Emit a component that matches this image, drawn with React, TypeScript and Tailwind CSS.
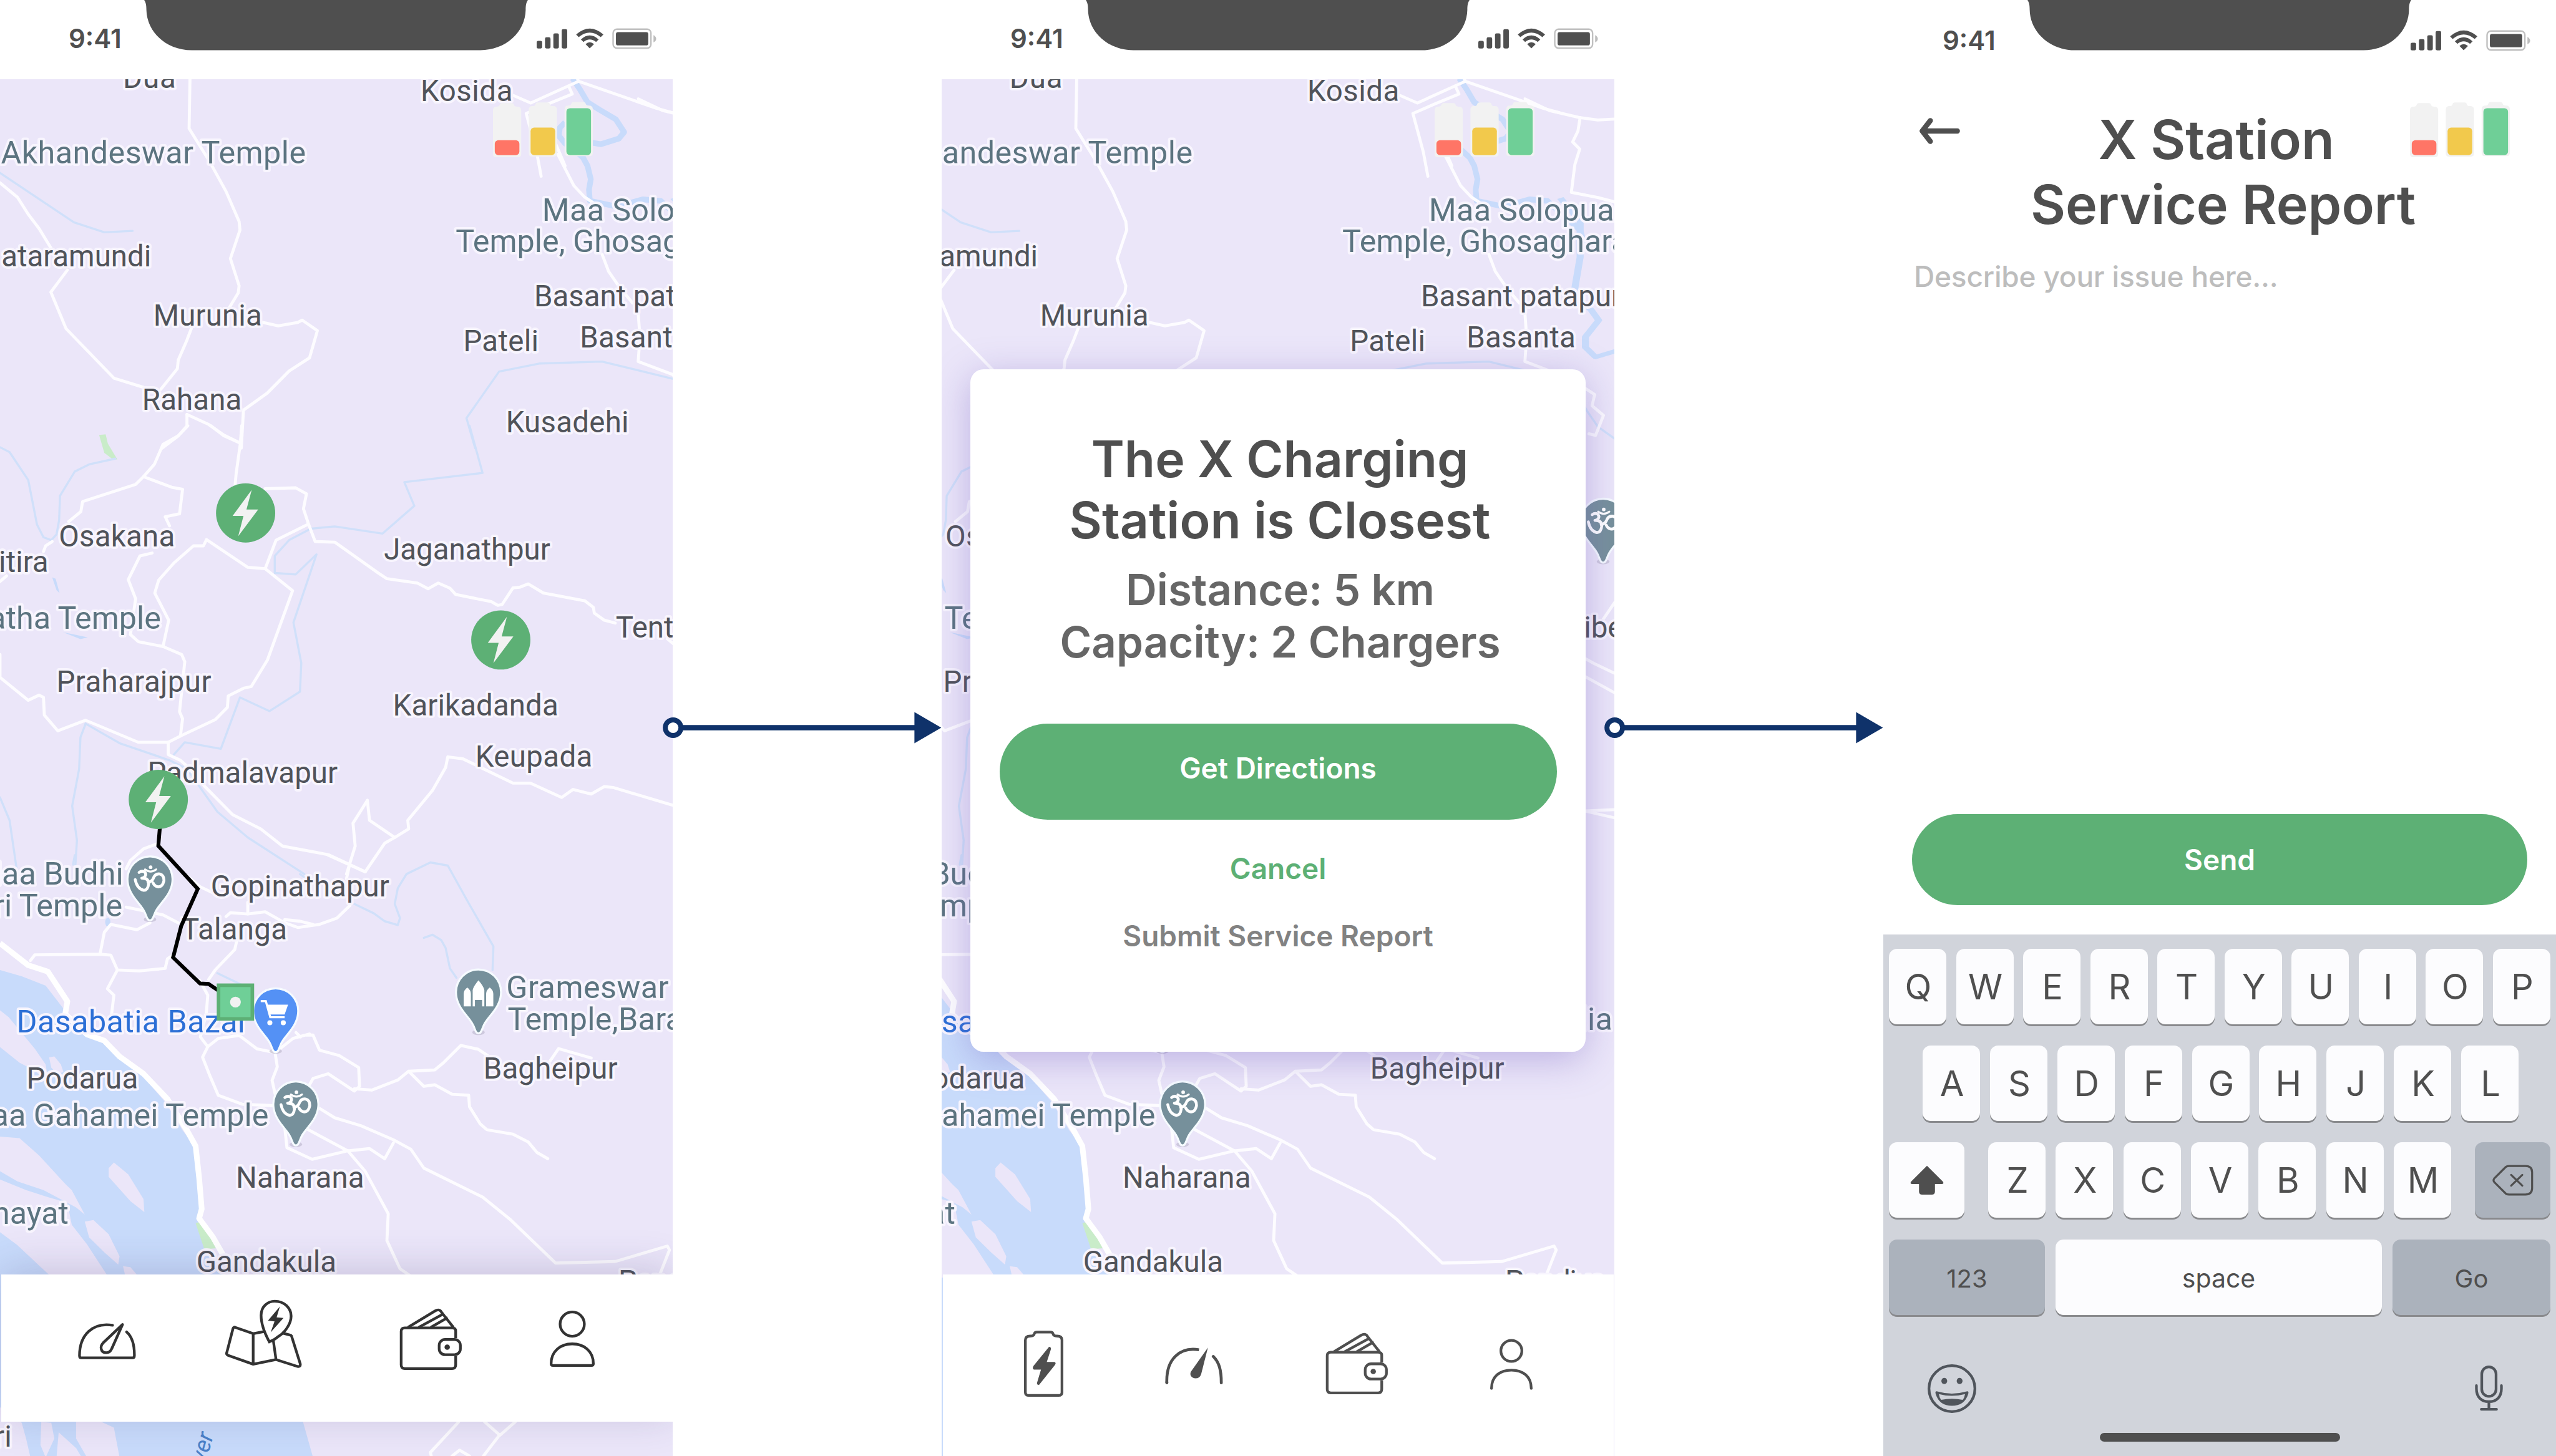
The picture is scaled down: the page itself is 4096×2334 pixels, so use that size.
import React from "react";

type Sheet = { transform: string; roads?: string[]; streams?: string[] };
type Label = { text: string; x: number; y: number; right?: number; end?: boolean; kind?: "poi" | "shop" };

/* ---------- map data, split into survey sheets ---------- */

const sheets: Sheet[] = [
  {
    transform: "scale(0.96939 0.63776)",
    roads: [
      "437,276 435,450 480,560 520,670 550,775 552,805 530,905 550,1000 548,1025 528,1075",
      "0,640 40,690 65,750 90,800 118,870",
      "155,945 117,1022 152,1150 262,1323 330,1355",
      "440,1150 430,1190 410,1260 408,1290 370,1362",
      "605,1128 640,1140 685,1128 695,1120 730,1157 720,1210 712,1252 665,1298 615,1375 560,1435 555,1568",
      "430,1450 430,1490 410,1525 373,1568",
      "430,1450 480,1485 515,1522 552,1550",
      "1283,540 1320,650 1345,690 1385,730",
      "1385,890 1400,950 1425,1005 1455,1060",
      "1468,1095 1472,1180 1468,1265 1547,1310 1560,1330",
    ],
    streams: [
      "0,605 170,778 240,813 305,808",
      "1093,1568 1073,1463 1148,1300 1240,1272 1385,1265 1547,1325 1570,1340",
    ],
  },
  {
    transform: "translate(0 950) scale(0.96939 0.63776)",
    roads: [
      "556,0 553,60 543,170 541,205",
      "485,0 515,35 552,60",
      "432,0 410,35 375,65 355,135 330,178 312,205 190,265 186,300 158,335",
      "330,178 395,215 420,222 413,308 380,318 390,350",
      "610,220 680,217 705,238 698,290 710,345 725,405 770,407 870,515 890,535 960,550 985,570 1008,550 1035,568 1048,590 1130,615 1145,628 1155,625 1180,567 1195,565 1215,553 1250,585 1345,612 1365,635 1367,655 1390,680 1415,690",
      "708,345 635,400 610,500 570,495 475,398 468,420 445,420 400,480 365,540 356,585 388,680 375,772",
      "610,500 673,577 615,820 578,912 560,918 525,945 523,985 495,1028 418,1083 387,1107 318,1107 197,1030 133,1067 102,1012 100,950 90,942 65,960 0,880 0,800",
      "350,445 322,455 295,538 312,605 300,730 318,755 375,772 418,800 425,825 413,1000 420,1025 415,1085",
      "387,1107 387,1150 415,1170 430,1190 470,1260 535,1360 600,1410 650,1470 755,1500 840,1560",
      "0,545 15,525",
      "120,405 105,420 100,440",
      "845,1310 812,1390 817,1470 797,1568",
      "845,1310 850,1380 908,1440",
      "840,1560 885,1460 908,1440 940,1410 938,1380 995,1275 1025,1195 1030,1158 1065,1165 1180,1250 1220,1250 1292,1300 1318,1272 1360,1288 1390,1262 1410,1265 1547,1327 1700,1380",
      "365,1460 330,1480 300,1520 290,1550",
      "1535,745 1555,770 1625,830 1680,870",
    ],
    streams: [
      "0,75 22,92 65,190 85,345 100,390 118,400 130,380 136,330 138,245 172,160 205,135 265,115",
      "1080,0 1110,165 930,197 953,280 880,377 770,352 715,360 665,400 632,455 632,515 680,520 728,450 675,688 693,830 690,930 620,998 552,950 508,1130 425,1107 400,1150",
      "197,1042 275,1110 390,1170 430,1200 500,1350 570,1440 700,1568",
      "197,1042 185,1090 182,1200 166,1330 177,1450 172,1568",
      "0,1300 22,1380 40,1568",
    ],
  },
  {
    transform: "translate(0 1750) scale(0.96939 0.70151)",
    roads: [
      "755,225 840,278",
      "797,300 805,250",
      "805,385 775,425 735,445 685,455 655,440 610,405 570,412 530,408 520,420",
      "570,412 570,375",
      "655,430 690,435 720,445",
      "490,345 460,325 430,290",
      "545,495 540,525 495,590 480,620",
      "70,560 80,542 230,540 255,543 270,590 320,593 380,585 385,555 400,540",
      "270,590 247,650 262,670 255,750",
      "230,540 240,470 255,445 315,462 345,440",
      "290,390 375,415 410,440",
      "705,797 720,797 735,845 780,862 825,900 827,960 815,975 755,920 720,935 710,960",
      "815,968 855,972 915,940 940,912 1000,908 1020,885 1060,830 1100,842 1130,870",
      "940,912 975,960 1000,955 1040,985 1078,988 1080,1025 1105,1080 1120,1098 1180,1112 1215,1137 1235,1170 1260,1190",
      "1265,880 1285,840 1360,870",
      "735,1030 770,1060 830,1085 905,1130 945,1160 975,1220 1110,1312 1175,1385 1278,1522 1415,1517 1535,1468 1540,1480 1515,1568",
      "705,1095 800,1165 840,1230 893,1365 890,1450 920,1540 950,1568",
      "800,1165 718,1192 660,1155 655,1090",
      "800,1165 850,1158 885,1190 905,1140",
    ],
    streams: [
      "700,295 690,285",
      "815,380 860,410 885,435 915,447 920,425 908,380 915,330 935,285 990,248 1030,258 1075,370 1135,515 1133,590",
      "975,488 995,478 1015,495 1025,520 1035,585 1050,615",
      "500,600 560,640",
      "172,225 168,255",
    ],
  },
  {
    transform: "translate(280 2180) scale(0.33333)",
    roads: [
      "495,20 550,120 540,240 500,400 550,465 515,535 560,650 620,790 780,850 1000,860",
      "550,465 620,410 760,390 880,480 1000,505 1015,600 980,690 1000,780",
      "1000,505 1120,410 1230,380",
      "1140,370 1170,400",
    ],
  },
  {
    transform: "translate(1080 40) scale(0.33333)",
    roads: [
      "195,520 310,570 630,425 620,400",
      "630,425 1150,605 1260,635",
      "565,460 588,510 430,575 280,640 350,900 380,1060",
      "480,850 540,990",
    ],
  },
  {
    transform: "translate(0 2780) scale(0.96939 0.33333)",
    roads: ["1055,1176 990,1380 992,1404", "1115,1176 1150,1265 1185,1176", "1150,1260 1112,1404", "1040,1404 1057,1365 1080,1404"],
  },
  {
    transform: "translate(102.5 0) scale(0.98213 0.57398)",
    roads: ["1345,385 1400,430 1468,457 1510,467 1548,463", "1470,457 1465,510 1453,552 1469,580 1458,640 1450,748 1510,768 1548,785"],
  },
  {
    transform: "translate(102.5 800) scale(0.98213 0.89286)",
    roads: [
      "1482,75 1503,90 1497,118 1523,142 1505,192 1490,188",
      "1482,795 1548,835",
      "1482,1130 1548,1127",
      "1548,610 1520,655",
    ],
    streams: ["1470,100 1485,130 1510,170 1548,200"],
  },
];

const labels: Label[] = [
  { text: "Dua", x: 279, y: 196, right: 390 },
  { text: "Kosida", x: 943, y: 226, right: 1141 },
  { text: "Akhandeswar Temple", x: 4, y: 365, right: 680, kind: "poi" },
  { text: "ataramundi", x: 5, y: 594, right: 335 },
  { text: "Murunia", x: 347, y: 727, right: 582 },
  { text: "Rahana", x: 322, y: 914, right: 537 },
  { text: "Maa Solopua", x: 1214, y: 493, right: 1620, kind: "poi" },
  { text: "Temple, Ghosaghara", x: 1018, y: 563, kind: "poi" },
  { text: "Basant patapur", x: 1196, y: 684, right: 1636 },
  { text: "Pateli", x: 1038, y: 784, right: 1199 },
  { text: "Basanta", x: 1298, y: 776, right: 1534 },
  { text: "Kusadehi", x: 1133, y: 965, right: 1400 },
  { text: "Osakana", x: 136, y: 1219, right: 388 },
  { text: "Jaganathpur", x: 858, y: 1248, right: 1225 },
  { text: "itira", x: 108, y: 1276, end: true },
  { text: "atha Temple", x: 359, y: 1403, end: true, kind: "poi" },
  { text: "Tentulibeda", x: 1375, y: 1423 },
  { text: "Praharajpur", x: 131, y: 1544, right: 469 },
  { text: "Karikadanda", x: 881, y: 1597, right: 1243 },
  { text: "Keupada", x: 1065, y: 1710, right: 1319 },
  { text: "Padmalavapur", x: 334, y: 1747, right: 751 },
  { text: "Maa Budhi", x: 275, y: 1974, end: true, kind: "poi" },
  { text: "ri Temple", x: 273, y: 2044, end: true, kind: "poi" },
  { text: "Gopinathapur", x: 475, y: 2000, right: 866 },
  { text: "Talanga", x: 407, y: 2096, right: 638 },
  { text: "Dasabatia Bazar", x: 42, y: 2303, right: 552, kind: "shop" },
  { text: "Grameswar", x: 1134, y: 2227, right: 1489, kind: "poi" },
  { text: "Temple,Baradia", x: 1134, y: 2298, right: 1616, kind: "poi" },
  { text: "Podarua", x: 64, y: 2428, right: 306 },
  { text: "Maa Gahamei Temple", x: 599, y: 2512, end: true, kind: "poi" },
  { text: "Bagheipur", x: 1083, y: 2406, right: 1375 },
  { text: "Naharana", x: 531, y: 2650, right: 810 },
  { text: "nayat", x: 153, y: 2730, end: true, kind: "poi" },
  { text: "Gandakula", x: 443, y: 2837, right: 748 },
  { text: "Pandiya", x: 1384, y: 2881, right: 1600 },
  { text: "ri", x: 26, y: 3227, end: true },
];

const riverBanks =
  "0,590 50,610 105,640 150,720 200,790 240,820 265,860 330,930 380,1010 420,1100 448,1150 460,1330 455,1400 478,1470 520,1568 600,1800 697,2027 720,2140 0,2140";

const islands = [
  "0,718 20,740 50,790 80,840 105,890 112,950 80,910 45,885 0,835",
  "113,868 125,865 140,890 146,915 130,920 118,900",
  "0,1120 45,1125 90,1180 150,1270 165,1290 195,1368 175,1345 100,1290 40,1262 0,1230",
  "0,1256 60,1290 110,1312 155,1330 165,1400 200,1462 250,1568 120,1568 90,1530 40,1465 0,1424",
  "250,1220 262,1202 295,1240 330,1318 332,1360 300,1325 250,1248",
  "195,1390 215,1385 250,1430 275,1500 272,1527 240,1488 205,1440",
  "283,1532 300,1535 325,1575 290,1575",
  "0,1980 50,2030 60,2080 70,2140 0,2140",
  "95,2027 118,2030 125,2080 105,2140 93,2100",
  "135,2060 175,2110 188,2140 130,2140",
  "175,2027 230,2025 262,2045 275,2140 200,2140 175,2080",
];

/* ---------- map drawing ---------- */

function Pin({ x, y, fill, children }: { x: number; y: number; fill: string; children: React.ReactNode }) {
  return (
    <g transform={`translate(${x} ${y})`}>
      <ellipse cx="0" cy="90" rx="14" ry="6" fill="#b9b4c9" opacity="0.6" />
      <path
        d="M0 90C-4 90 -6 82 -9 75C-18 53 -48 35 -48 0A48 48 0 0 1 48 0C48 35 18 53 9 75C6 82 4 90 0 90Z"
        fill={fill}
        stroke="#f6fbff"
        strokeWidth="9"
        style={{ paintOrder: "stroke" }}
      />
      {children}
    </g>
  );
}

function OmSign() {
  return (
    <g transform="scale(0.33333) translate(-1139 -850)" fill="none" stroke="#fff" strokeWidth="19" strokeLinecap="round" strokeLinejoin="round">
      <path d="M1066 806Q1084 792 1102 802Q1118 818 1104 834Q1096 842 1084 844Q1128 842 1130 880Q1126 924 1098 926Q1052 916 1040 854" />
      <path d="M1126 872Q1150 868 1160 848Q1172 812 1204 816Q1234 824 1232 862Q1222 906 1190 902Q1168 896 1160 876" />
      <path d="M1106 786Q1142 814 1180 786" strokeWidth="14" />
      <circle cx="1143" cy="771" r="12" fill="#fff" stroke="none" />
    </g>
  );
}

function CartSign() {
  return (
    <g transform="scale(0.33333) translate(-1004 -225)">
      <path d="M904 160H938L968 268H1064" fill="none" stroke="#fff" strokeWidth="14" />
      <path d="M944 184H1087L1064 250H964Z" fill="#fff" />
      <circle cx="965" cy="305" r="17" fill="#fff" />
      <circle cx="1055" cy="305" r="17" fill="#fff" />
    </g>
  );
}

function ShrineSign() {
  return (
    <g fill="#fff">
      <path d="M-33 32V4Q-33 -4 -25 -10Q-17 -4 -17 4V32Z" />
      <path d="M33 32V4Q33 -4 25 -10Q17 -4 17 4V32Z" />
      <path d="M-13 32V-4Q-12 -12 0 -26Q12 -12 13 -4V32H8V18H-8V32Z" />
    </g>
  );
}

function ChargerMarker({ x, y }: { x: number; y: number }) {
  return (
    <g transform={`translate(${x} ${y})`}>
      <circle r="66" fill="#5db075" />
      <path d="M13.6 -51.7L1.9 -7.7H28L-16.5 51.7L-4.8 6.4H-29Z" fill="#f2f2f2" />
    </g>
  );
}

function LabelText({ label }: { label: Label }) {
  const fill = label.kind === "poi" ? "#5c7480" : label.kind === "shop" ? "#2c6fd6" : "#50535a";
  const bearing = label.end ? 0 : /^[TAJa]/.test(label.text) ? 2 : 5;
  return (
    <text
      x={label.x - bearing}
      y={label.y}
      fill={fill}
      fontSize={label.kind ? 70 : 66}
      textAnchor={label.end ? "end" : "start"}
      textLength={label.right ? label.right - label.x + bearing + 2 : undefined}
      stroke="#f8f5fe"
      strokeWidth="11"
      strokeLinejoin="round"
      style={{ paintOrder: "stroke" }}
    >
      {label.text}
    </text>
  );
}

function RegionMap({ left, children }: { left: number; children?: React.ReactNode }) {
  return (
    <svg
      viewBox={`${left} 177 1500 3071`}
      preserveAspectRatio="none"
      className="block h-[2207px] w-[1078px] bg-[#ebe6f9] font-[Roboto,sans-serif]"
    >
      <g transform="translate(0 1750) scale(0.96939 0.70151)">
        <polygon points={riverBanks} fill="#c8dbfb" />
        {islands.map((p) => (
          <polygon key={p} points={p} fill="#ebe6f9" />
        ))}
        <polygon points="450,1395 465,1388 497,1475 470,1478" fill="#c9ecc9" />
        <ellipse cx="248" cy="438" rx="6" ry="14" fill="#c8dbfb" />
      </g>
      <g transform="translate(0 950) scale(0.96939 0.63776)">
        <polygon points="228,32 243,30 248,62 270,118 260,118 240,95" fill="#c9ecc9" />
        <polygon points="120,530 128,535 137,585 130,575" fill="#c8dbfb" />
        <polygon points="145,722 165,728 202,740 185,746" fill="#c8dbfb" />
      </g>
      <g transform="translate(1080 40) scale(0.33333)" fill="none" stroke="#c8dbfb" strokeLinejoin="round">
        <polyline points="590,405 640,480 690,565 770,615 880,680 935,765 900,808 780,846 720,836" strokeWidth="38" />
        <polyline points="540,700 505,735 498,790 540,840 610,890 660,935 690,990 712,1080 700,1150 706,1225 780,1240 870,1260 950,1245 1060,1215 1180,1225 1260,1300 1400,1420 1440,1560" strokeWidth="38" />
      </g>
      <g transform="translate(102.5 0) scale(0.98213 0.57398)" fill="none" stroke="#c8dbfb" strokeLinejoin="round">
        <polyline points="1425,770 1470,860 1470,1000 1458,1120 1465,1160 1495,1205 1512,1245 1482,1310 1482,1350 1505,1388 1560,1360" strokeWidth="16" />
      </g>
      {sheets.map((s) => (
        <g key={s.transform} transform={s.transform} fill="none" strokeLinejoin="round" strokeLinecap="round">
          {s.streams?.map((p) => (
            <polyline key={p} points={p} stroke="#d0e0fa" strokeWidth="3.4" vectorEffect="non-scaling-stroke" />
          ))}
          {s.roads?.map((p) => (
            <polyline key={p} points={p} stroke="#fdfcff" strokeWidth="4.8" vectorEffect="non-scaling-stroke" />
          ))}
        </g>
      ))}
      <polyline
        transform="translate(0 1750) scale(0.96939 0.70151)"
        points="0,505 65,575 110,595 155,690 150,730 200,795 240,815 275,865 330,920 385,1000 430,1100 450,1150 458,1250 464,1350 458,1380 490,1440 515,1500 540,1568"
        fill="none"
        stroke="#fff"
        strokeWidth="9"
        strokeLinejoin="round"
        vectorEffect="non-scaling-stroke"
      />
      {labels.map((l) => (
        <LabelText key={l.text + l.y} label={l} />
      ))}
      <text x="0" y="0" fontSize="52" fontStyle="italic" fill="#4a80c8" transform="translate(458 3266) rotate(-74)">
        ver
      </text>
      <Pin x={334.5} y={1961} fill="#76909b">
        <OmSign />
      </Pin>
      <Pin x={614.7} y={2255} fill="#5491f5">
        <CartSign />
      </Pin>
      <Pin x={1067} y={2213} fill="#76909b">
        <ShrineSign />
      </Pin>
      <Pin x={659.7} y={2463} fill="#76909b">
        <OmSign />
      </Pin>
      <Pin x={1597.5} y={1163} fill="#76909b">
        <OmSign />
      </Pin>
      {children}
    </svg>
  );
}

function ChargerOverlay() {
  return (
    <>
      <polyline
        points="357,1840 353,1887 441,1983 404,2066 386,2136 446,2194 465,2195 483,2207 500,2220"
        fill="none"
        stroke="#000"
        strokeWidth="8.5"
      />
      <ChargerMarker x={547.7} y={1144.5} />
      <ChargerMarker x={1116.7} y={1427.7} />
      <ChargerMarker x={353} y={1783.5} />
      <rect x="487.3" y="2198" width="75.4" height="75" fill="#6fcf97" stroke="#5db075" strokeWidth="8" />
      <circle cx="525" cy="2235.5" r="12" fill="#f2f2f2" />
    </>
  );
}

/* ---------- shared phone parts ---------- */

function StatusIcons() {
  return (
    <svg viewBox="350 70 804 142" className="h-[34px] w-[192px]" fill="#4f4f4f">
      <rect x="350" y="156" width="37" height="51" rx="10" />
      <rect x="406" y="132" width="37" height="75" rx="10" />
      <rect x="462" y="105" width="37" height="102" rx="10" />
      <rect x="518" y="77" width="37" height="130" rx="10" />
      <path d="M615 113Q706 33 798 113L780 131Q706 70 632 131Z" />
      <path d="M647 146Q706 92 766 146L749 163Q706 130 664 163Z" />
      <path d="M678 178Q706 152 735 178L706 206Z" />
      <rect x="863" y="77" width="254" height="128" rx="26" fill="none" stroke="#c0c0c0" strokeWidth="10" />
      <rect x="882" y="97" width="217" height="89" rx="14" />
      <path d="M1134 117Q1152 127 1152 142Q1152 157 1134 166Z" fill="#bdbdbd" />
    </svg>
  );
}

function StatusBar({ shifted = false }: { shifted?: boolean }) {
  return (
    <header
      className={
        shifted
          ? "relative flex h-[127px] shrink-0 items-start justify-between pt-[39px] pr-[41px] pl-[95px]"
          : "relative flex h-[127px] shrink-0 items-start justify-between pt-[36px] pr-[26px] pl-[110px]"
      }
    >
      <span className="text-[42px] leading-[51px] font-semibold text-[#4f4f4f]">9:41</span>
      <svg viewBox="322 0 856 112" className="absolute top-0 left-[231px] h-[80.5px] w-[615px]">
        <path
          d="M322 0C326 6 327 12 327 22C328 72 372 112 428 112H1072C1128 112 1172 72 1173 22C1173 12 1174 6 1178 0Z"
          fill="#4f4f4f"
        />
      </svg>
      <div className="pt-[9px]">
        <StatusIcons />
      </div>
    </header>
  );
}

const cells = [
  { x: 0, level: 33.5, fill: "#ff7566" },
  { x: 80, level: 61.7, fill: "#f2c94c" },
  { x: 160, level: 105, fill: "#6fcf97" },
];

function BatteryLevels() {
  return (
    <svg viewBox="0 -4 223 124" className="h-[89px] w-[160px]">
      {cells.map((c, i) => (
        <g key={c.fill}>
          <path
            transform={`translate(${c.x} ${-2 - i * 1.2})`}
            d="M8 9Q14 9 15 5Q16 1 20 1H42Q46 1 47 5Q48 9 54 9Q63 9 63 17V115Q63 122 56 122H7Q0 122 0 115V17Q0 9 8 9Z"
            fill="#f2f2f2"
          />
          <rect x={c.x + 4} y={115.5 - c.level} width="55" height={c.level} rx="8" fill={c.fill} />
        </g>
      ))}
    </svg>
  );
}

function Connector() {
  return (
    <div className="z-10 flex w-[431px] shrink-0 items-start pt-[1140px]">
      <svg viewBox="0 0 600 74" className="h-[53px] w-[431px] overflow-visible">
        <path d="M16 37H545" stroke="#0f326a" strokeWidth="12" />
        <path d="M540 2L600 37L540 72Z" fill="#0f326a" />
        <circle cx="0" cy="37" r="17.5" fill="#fff" stroke="#0f326a" strokeWidth="11" />
      </svg>
    </div>
  );
}

/* ---------- tab bar icons ---------- */

function DashboardIcon() {
  return (
    <svg viewBox="42 218 388 250" className="h-[60px] w-[93px]" fill="none" stroke="#333" strokeWidth="18" strokeLinecap="round" strokeLinejoin="round">
      <path d="M273 236C140 215 52 300 52 440Q52 454 64 454H406Q419 454 419 440C420 360 398 308 367 281" />
      <path d="M340 231L210 354C185 380 195 420 230 420Q257 420 268 392Z" />
    </svg>
  );
}

function ChargeMapIcon() {
  return (
    <svg viewBox="1022 64 518 462" className="h-[111px] w-[124px]" fill="none" stroke="#333" strokeWidth="18" strokeLinejoin="round">
      <path d="M1284 279L1213 292L1095 251Q1082 245 1078 258L1036 420Q1032 432 1046 438L1213 497L1366 466L1510 512Q1532 516 1528 494L1471 312Q1469 304 1460 302L1404 287" />
      <path d="M1213 292V497M1348 340L1366 466" />
      <path d="M1321 347C1290 290 1266 220 1266 170C1266 110 1310 75 1358 75C1420 75 1467 120 1467 175C1467 230 1420 290 1380 312C1356 334 1344 336 1321 347Z" strokeLinejoin="miter" />
      <path d="M1392 110L1312 205L1356 210L1330 284L1416 187L1370 183Z" fill="#333" stroke="none" />
    </svg>
  );
}

function WalletIcon({ color }: { color: string }) {
  return (
    <svg viewBox="0 0 141 140" className="h-[100.5px] w-[101px]" fill="none" stroke={color} strokeWidth="6" strokeLinejoin="round">
      <path d="M126 67V51Q126 44 118 44H12Q4 44 4 52V127Q4 135 12 135H118Q126 135 126 127V107" />
      <rect x="89" y="70" width="47.5" height="34" rx="13" />
      <circle cx="107" cy="87" r="6" fill={color} stroke="none" />
      <path d="M19 43L80 6Q90 0 95 10L121 43M43 43L100 12M70 43L108 21" />
    </svg>
  );
}

function ProfileIcon() {
  return (
    <svg viewBox="0 0 100 125" className="h-[90px] w-[72px]" fill="none" stroke="#333" strokeWidth="6" strokeLinejoin="round">
      <ellipse cx="50" cy="30" rx="27" ry="27" />
      <path d="M3 118C3 90 24 74 50 74S97 90 97 118Q97 122 93 122H7Q3 122 3 118Z" />
    </svg>
  );
}

function ChargeIcon() {
  return (
    <svg viewBox="0 0 88 149" className="h-[107px] w-[63px]">
      <path
        d="M14 12Q22 12 23 7Q24 3 29 3H59Q64 3 65 7Q66 12 74 12Q85 12 85 21V138Q85 145 77 145H11Q3 145 3 138V21Q3 12 14 12Z"
        fill="none"
        stroke="#4f4f4f"
        strokeWidth="6"
      />
      <path d="M56 36Q61 36 60 42L51 70H68Q73 72 69 77L34 121Q29 122 29 117L38 87H22Q18 85 21 79Z" fill="#4f4f4f" />
    </svg>
  );
}

function MeterIcon() {
  return (
    <svg viewBox="0 0 130 82" className="h-[59px] w-[93px]" fill="none" stroke="#4f4f4f" strokeWidth="6.5" strokeLinecap="round">
      <path d="M4 79C2 25 34 -2 76 5" strokeLinecap="butt" />
      <path d="M4 79V77M126 79C126 50 121 33 108 20" />
      <path d="M96 0L58 54C54 62 60 69 68 69Q78 69 81 59Z" fill="#4f4f4f" stroke="none" />
    </svg>
  );
}

function PersonIcon() {
  return (
    <svg viewBox="0 0 95 114" className="h-[82px] w-[68px]" fill="none" stroke="#4f4f4f" strokeWidth="6" strokeLinecap="round">
      <circle cx="47.5" cy="27" r="23.5" />
      <path d="M3 111C3 84 22 70 47.5 70S92 84 92 111" />
    </svg>
  );
}

/* ---------- screens ---------- */

function MapScreen() {
  return (
    <section className="flex h-[2334px] w-[1078px] shrink-0 flex-col overflow-hidden">
      <StatusBar />
      <main className="relative">
        <RegionMap left={0}>
          <ChargerOverlay />
        </RegionMap>
        <div className="absolute top-[36px] left-[790px]">
          <BatteryLevels />
        </div>
        <nav className="absolute top-[1916px] right-0 left-[1.5px] flex h-[236px] items-start bg-white pl-[123px] shadow-[0_-8px_60px_rgba(60,50,110,0.2)]">
          <div className="mt-[77px] mr-[142px]">
            <DashboardIcon />
          </div>
          <div className="mt-[40px] mr-[156px]">
            <ChargeMapIcon />
          </div>
          <div className="mt-[54px] mr-[140px]">
            <WalletIcon color="#333333" />
          </div>
          <div className="mt-[58px]">
            <ProfileIcon />
          </div>
        </nav>
      </main>
    </section>
  );
}

function StationScreen() {
  return (
    <section className="flex h-[2334px] w-[1078px] shrink-0 flex-col overflow-hidden">
      <StatusBar />
      <main className="relative overflow-hidden">
        <RegionMap left={122.5} />
        <div className="absolute top-[36px] left-[790px]">
          <BatteryLevels />
        </div>
        <article className="absolute top-[465px] left-[46px] flex h-[1094px] w-[986px] flex-col items-center rounded-[21px] bg-white pt-[95px] text-center shadow-[0_12px_60px_rgba(110,90,190,0.38)]">
          <h2 className="pl-[6px] text-[80.5px] leading-[97.7px] font-semibold text-[#4f4f4f]">
            The X Charging
            <br />
            Station is Closest
          </h2>
          <p className="mt-[22px] pl-[7px] text-[69px] leading-[83.2px] font-semibold text-[#666666]">
            Distance: 5 km
            <br />
            Capacity: 2 Chargers
          </p>
          <button className="mt-[89px] h-[154px] w-[893px] rounded-full bg-[#5db075] pb-[10px] text-[46px] font-semibold text-white">
            Get Directions
          </button>
          <button className="mt-[50px] text-[46px] leading-[56px] font-semibold text-[#5db075]">Cancel</button>
          <button className="mt-[52px] text-[46px] leading-[56px] font-semibold text-[#828282]">Submit Service Report</button>
        </article>
        <nav className="absolute top-[1916px] right-[1.5px] bottom-0 left-[1.5px] flex items-start bg-white pl-[130px]">
          <div className="mt-[90px] mr-[163px]">
            <ChargeIcon />
          </div>
          <div className="mt-[117px] mr-[164px]">
            <MeterIcon />
          </div>
          <div className="mt-[93px] mr-[163px]">
            <WalletIcon color="#4f4f4f" />
          </div>
          <div className="mt-[103px]">
            <PersonIcon />
          </div>
        </nav>
      </main>
    </section>
  );
}

function Key({ label }: { label: string }) {
  return (
    <button className="flex h-[121px] w-[92px] items-center justify-center rounded-[13px] bg-[#fcfcfe] pl-[2px] text-[56px] text-[#4f4f4f] shadow-[0_3px_0_#898a8d]">
      {label}
    </button>
  );
}

function Keyboard() {
  return (
    <div className="flex h-[836px] shrink-0 flex-col gap-[34.2px] bg-[#d1d4db] px-[9px] pt-[23px]">
      <div className="flex justify-between">
        {"QWERTYUIOP".split("").map((k) => (
          <Key key={k} label={k} />
        ))}
      </div>
      <div className="flex justify-between pr-[51px] pl-[54px]">
        {"ASDFGHJKL".split("").map((k) => (
          <Key key={k} label={k} />
        ))}
      </div>
      <div className="flex justify-between">
        <button className="flex h-[121px] w-[121px] items-center justify-center rounded-[13px] bg-[#fcfcfe] shadow-[0_3px_0_#898a8d]">
          <svg viewBox="0 0 76 66" className="h-[47px] w-[54px]">
            <path d="M38 1L74 37Q77 42 72 42H56V59Q56 66 49 66H27Q20 66 20 59V42H4Q-1 42 2 37Z" fill="#4f4f4f" />
          </svg>
        </button>
        <div className="flex w-[742px] justify-between">
          {"ZXCVBNM".split("").map((k) => (
            <Key key={k} label={k} />
          ))}
        </div>
        <button className="flex h-[121px] w-[121px] items-center justify-center rounded-[13px] bg-[#abb2bc] shadow-[0_3px_0_#898a8d]">
          <svg viewBox="0 0 92 70" className="h-[50px] w-[66px]" fill="none" stroke="#4f4f4f" strokeWidth="4.5" strokeLinejoin="round" strokeLinecap="round">
            <path d="M37 3H74Q89 3 89 17V53Q89 67 74 67H37Q31 67 28 63L4 39Q1 35 4 31L28 7Q31 3 37 3Z" />
            <path d="M42 23L67 47M67 23L42 47" />
          </svg>
        </button>
      </div>
      <div className="flex justify-between">
        <button className="flex h-[121px] w-[250px] items-center justify-center rounded-[13px] bg-[#abb2bc] pt-[5px] text-[40px] text-[#4f4f4f] shadow-[0_3px_0_#898a8d]">
          123
        </button>
        <button className="flex h-[121px] w-[523px] items-center justify-center rounded-[13px] bg-[#fcfcfe] pt-[5px] text-[41px] text-[#4f4f4f] shadow-[0_3px_0_#898a8d]">
          space
        </button>
        <button className="flex h-[121px] w-[253px] items-center justify-center rounded-[13px] bg-[#abb2bc] pt-[5px] text-[40px] text-[#4f4f4f] shadow-[0_3px_0_#898a8d]">
          Go
        </button>
      </div>
      <div className="mt-[45px] flex items-center justify-between pr-[76px] pl-[62px]">
        <svg viewBox="0 0 108 108" className="h-[78px] w-[78px]">
          <circle cx="54" cy="54" r="51" fill="none" stroke="#50555c" strokeWidth="6" />
          <ellipse cx="37" cy="37" rx="6.5" ry="7" fill="#50555c" />
          <ellipse cx="71" cy="37" rx="6.5" ry="7" fill="#50555c" />
          <path d="M20 60Q54 70 88 60Q92 60 90 66Q82 92 54 92Q26 92 18 66Q16 60 20 60Z" fill="#50555c" />
          <path d="M25 66Q54 74 83 66Q82 74 78 79Q54 74 30 79Q26 74 25 66Z" fill="#d1d4db" />
        </svg>
        <svg viewBox="0 0 62 102" className="h-[73px] w-[45px]" fill="none" stroke="#50555c" strokeWidth="6" strokeLinecap="round">
          <rect x="15" y="3" width="32" height="66" rx="16" />
          <path d="M3 45V52C3 70 14 81 31 81S59 70 59 52V45M31 81V97M14 98H48" />
        </svg>
      </div>
      <div className="mx-auto mt-[-2px] h-[14px] w-[385px] rounded-full bg-[#4f4f4f]" />
    </div>
  );
}

function ReportScreen() {
  return (
    <section className="relative flex h-[2334px] w-[1078px] shrink-0 flex-col overflow-hidden">
      <StatusBar shifted />
      <div className="mt-[45px] flex items-start">
        <svg viewBox="0 0 90 58" className="mt-[17px] ml-[58px] h-[42px] w-[65px]" fill="none" stroke="#4f4f4f" strokeWidth="11.5" strokeLinecap="round" strokeLinejoin="round">
          <path d="M84 29H7M24 6L6 29L24 52" />
        </svg>
        <h1 className="mr-[112px] flex-1 text-center text-[86.2px] leading-[103.5px] font-semibold text-[#4f4f4f]">
          X Station{"\u00a0"}
          <br />
          Service Report
        </h1>
      </div>
      <div className="absolute top-[163px] left-[844px]">
        <BatteryLevels />
      </div>
      <p className="mt-[36px] ml-[49px] text-[46px] leading-[56px] font-medium tracking-[-0.2px] text-[#bdbdbd]">Describe your issue here...</p>
      <div className="flex-1" />
      <button className="mx-[46px] mb-[47px] h-[146px] rounded-full bg-[#5db075] text-[46px] font-semibold text-white">Send</button>
      <Keyboard />
    </section>
  );
}

export default function App() {
  return (
    <div className="flex h-[2334px] w-[4096px] overflow-hidden bg-white font-[Inter,sans-serif]">
      <MapScreen />
      <Connector />
      <StationScreen />
      <Connector />
      <ReportScreen />
    </div>
  );
}
